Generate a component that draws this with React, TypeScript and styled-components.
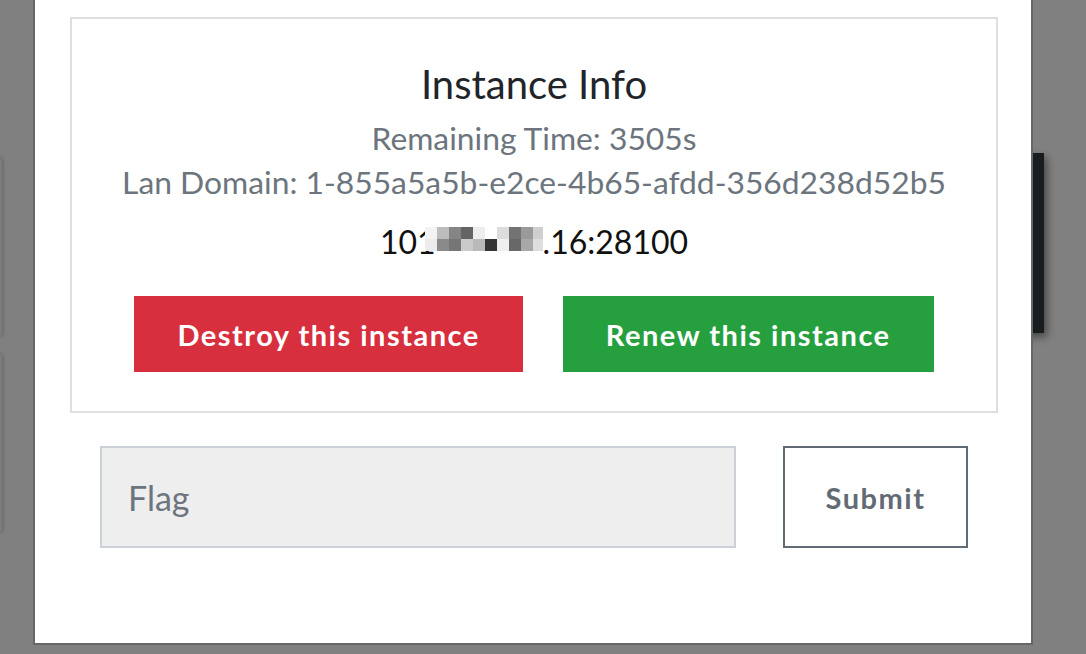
import React from 'react';
import styled, { createGlobalStyle } from 'styled-components';

const GlobalStyle = createGlobalStyle`
  html, body {
    margin: 0;
    padding: 0;
    background-color: #808080;
    overflow: hidden;
  }
  * {
    box-sizing: border-box;
  }
`;

const Page = styled.div`
  position: relative;
  width: 1086px;
  height: 654px;
  overflow: hidden;
  font-family: 'Lato', 'Open Sans', sans-serif;
`;

// dimmed page content peeking out from behind the modal
const BehindCard = styled.div<{ $top: number; $height: number }>`
  position: absolute;
  left: -100px;
  top: ${(p) => p.$top}px;
  width: 102px;
  height: ${(p) => p.$height}px;
  background-color: #7c7c7c;
  box-shadow: 0 0 4px rgba(0, 0, 0, 0.35);
  border-radius: 3px;
`;

const BehindDark = styled.div`
  position: absolute;
  left: 960px;
  top: 153px;
  width: 84px;
  height: 180px;
  background-color: #191c1f;
  box-shadow: 3px 4px 8px rgba(0, 0, 0, 0.45);
`;

const Modal = styled.div`
  position: relative;
  z-index: 1;
  margin-left: 33px;
  width: 1000px;
  height: 645px;
  background-color: #ffffff;
  border: 2px solid #666666;
  border-top: none;
  padding: 17px 33px 0 35px;
  display: flex;
  flex-direction: column;
  align-items: center;
`;

const InfoBox = styled.div`
  width: 928px;
  height: 396px;
  border: 2px solid #dfdfdf;
  padding-top: 41px;
  display: flex;
  flex-direction: column;
  align-items: center;
  text-align: center;
`;

const Title = styled.h4`
  margin: 0 0 8px;
  font-size: 40px;
  font-weight: 400;
  line-height: 48px;
  color: #212529;
`;

const InfoLine = styled.p`
  margin: 0;
  font-size: 31.8px;
  line-height: 44px;
  color: #6c757d;
  white-space: nowrap;
`;

const Address = styled.p`
  margin: 16px 0 0;
  font-size: 32px;
  line-height: 44px;
  color: #111111;
  display: flex;
  align-items: center;
`;

const Mosaic = styled.span`
  display: inline-grid;
  grid-template-columns: repeat(10, 12px);
  grid-template-rows: repeat(2, 12px);
  width: 118px;
  margin-left: -11px;
  margin-top: -6px;
  overflow: hidden;
`;

const Cell = styled.span<{ $c: string }>`
  background-color: ${(p) => p.$c};
`;

const ButtonRow = styled.div`
  display: flex;
  gap: 40px;
  margin-top: 32px;
`;

const ActionButton = styled.button<{ $variant: 'danger' | 'success' }>`
  height: 76px;
  padding: 0 43px;
  border: none;
  border-radius: 0;
  background-color: ${(p) => (p.$variant === 'danger' ? '#d82f3f' : '#26a03f')};
  color: #ffffff;
  font-family: 'Lato', sans-serif;
  font-size: 29px;
  font-weight: 700;
  letter-spacing: 1.5px;
  cursor: pointer;
`;

const FlagRow = styled.div`
  display: flex;
  gap: 47px;
  margin-top: 33px;
`;

const FlagInput = styled.input`
  width: 636px;
  height: 102px;
  background-color: #eeeeee;
  border: 2px solid #ccd1d8;
  border-radius: 0;
  padding: 0 26px;
  font-family: 'Lato', sans-serif;
  font-size: 34px;
  color: #495057;
  outline: none;

  &::placeholder {
    color: #6c757d;
  }
`;

const SubmitButton = styled.button`
  width: 185px;
  height: 102px;
  background-color: #ffffff;
  border: 2px solid #626b74;
  border-radius: 0;
  color: #626b74;
  font-family: 'Lato', sans-serif;
  font-size: 29px;
  font-weight: 700;
  letter-spacing: 1.5px;
  cursor: pointer;
`;

const mosaicColors = [
  '#f3f3f3', '#bcbcbc', '#858585', '#646464', '#ededed', '#ffffff', '#dcdcdc', '#737373', '#9a9a9a', '#cfcfcf',
  '#ececec', '#8a8a8a', '#767676', '#cacaca', '#b9b9b9', '#343434', '#efefef', '#686868', '#a8a8a8', '#dedede',
];

const App: React.FC = () => {
  return (
    <Page>
      <GlobalStyle />
      <BehindCard $top={158} $height={178} />
      <BehindCard $top={354} $height={178} />
      <BehindDark />
      <Modal>
        <InfoBox>
          <Title>Instance Info</Title>
          <InfoLine>Remaining Time: 3505s</InfoLine>
          <InfoLine>Lan Domain: 1-855a5a5b-e2ce-4b65-afdd-356d238d52b5</InfoLine>
          <Address>
            101
            <Mosaic>
              {mosaicColors.map((c, i) => (
                <Cell key={i} $c={c} />
              ))}
            </Mosaic>
            .16:28100
          </Address>
          <ButtonRow>
            <ActionButton $variant='danger'>Destroy this instance</ActionButton>
            <ActionButton $variant='success'>Renew this instance</ActionButton>
          </ButtonRow>
        </InfoBox>
        <FlagRow>
          <FlagInput placeholder='Flag' />
          <SubmitButton>Submit</SubmitButton>
        </FlagRow>
      </Modal>
    </Page>
  );
};

export default App;
